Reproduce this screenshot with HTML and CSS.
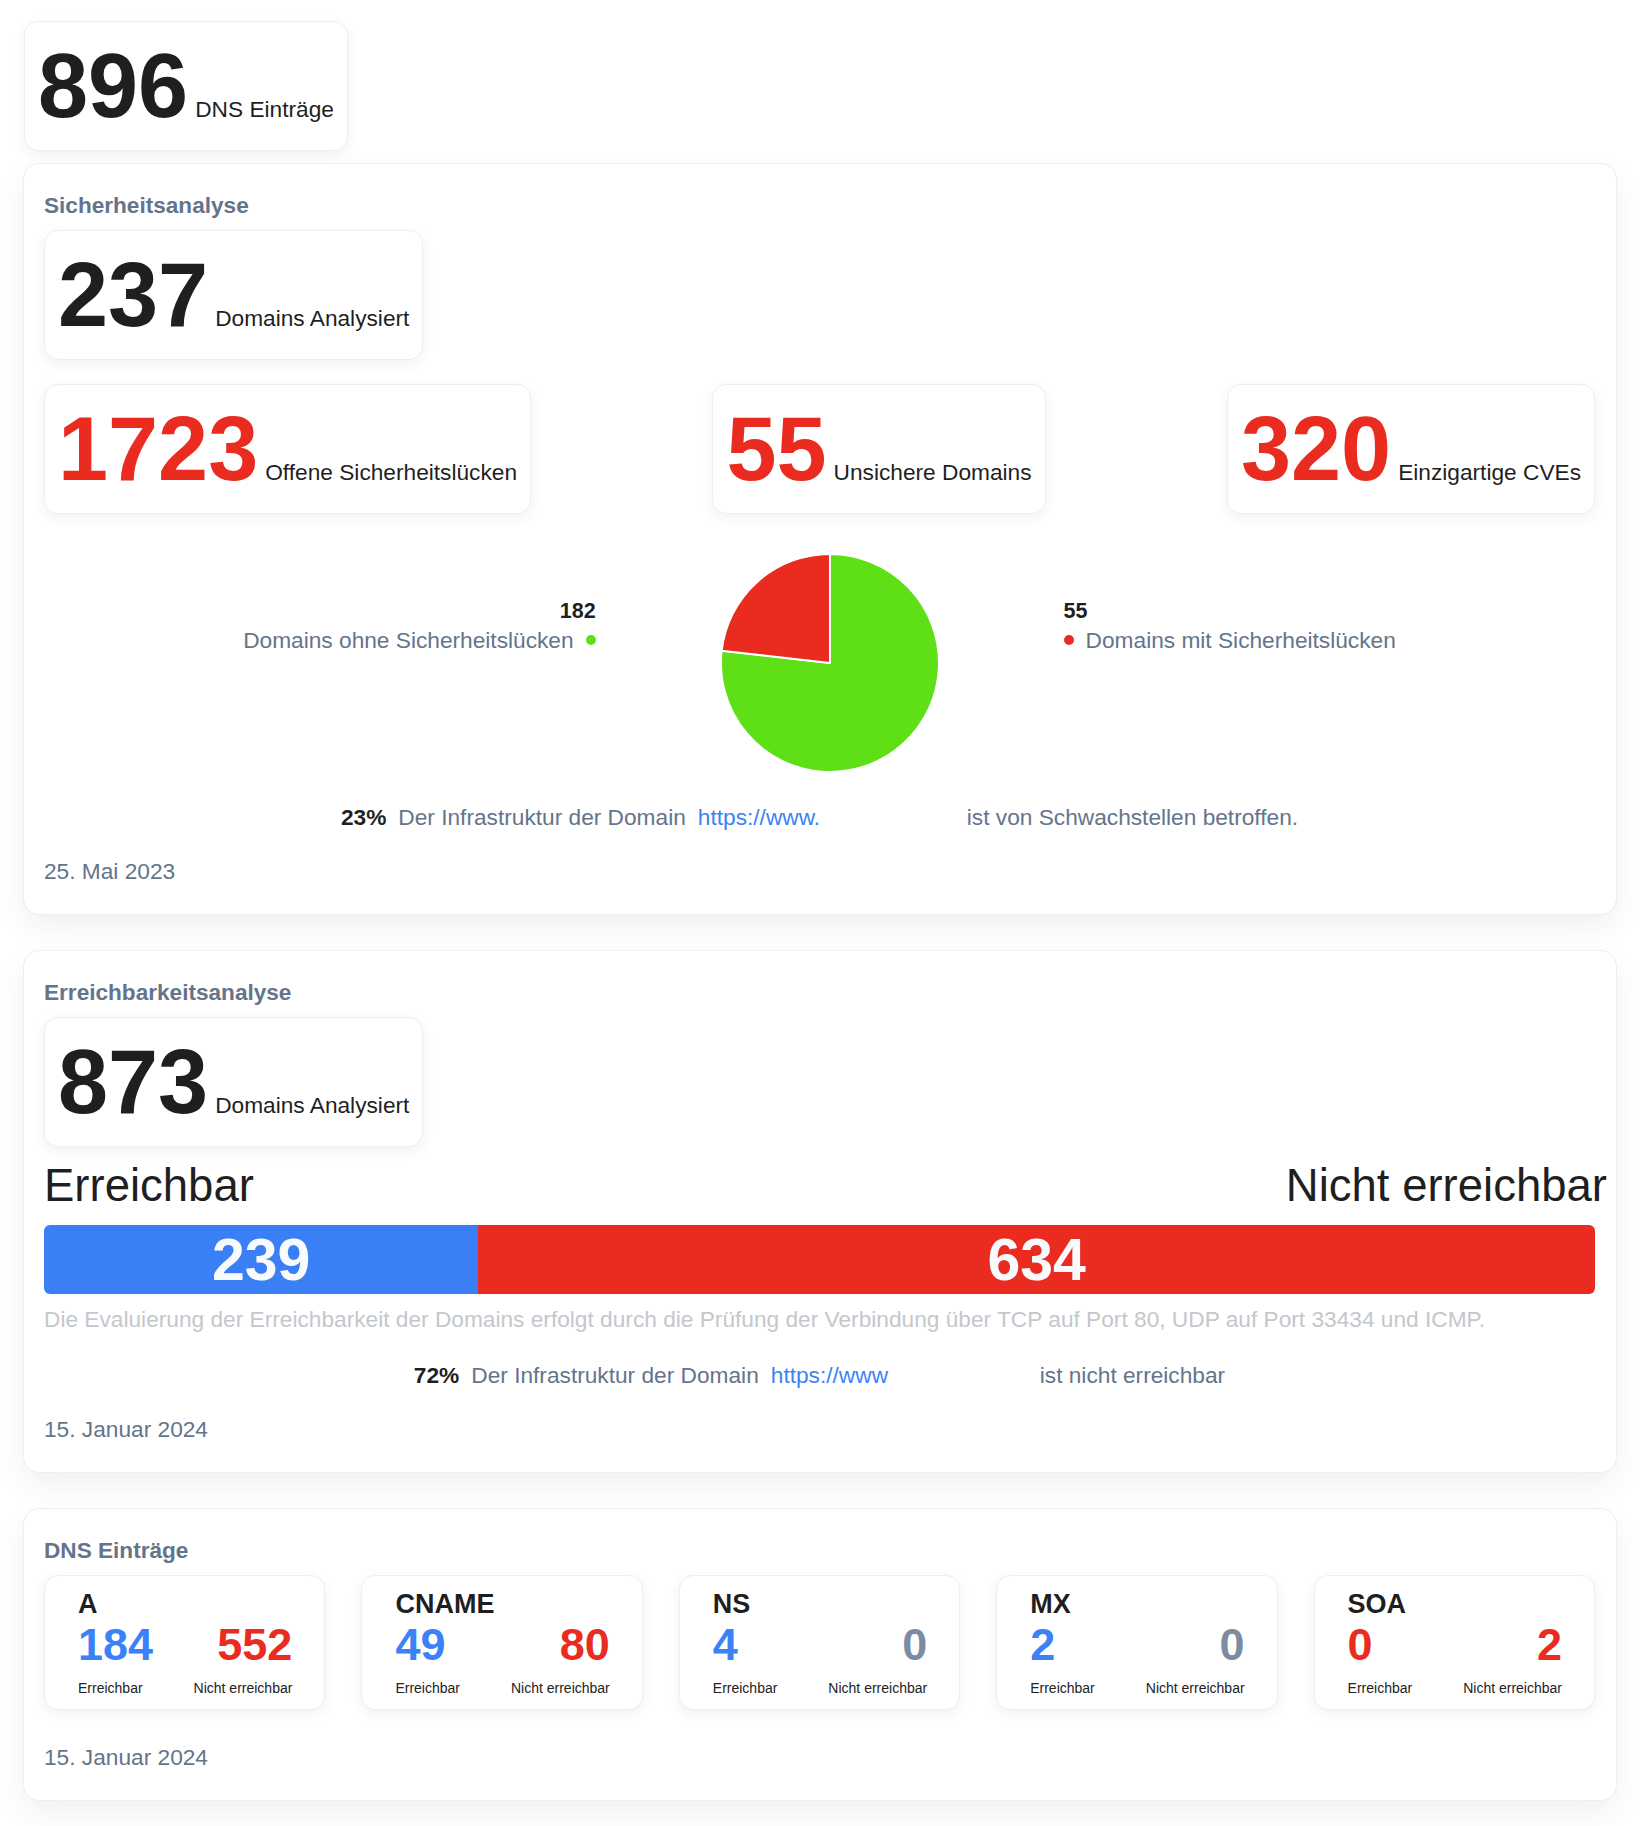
FILE: index.html
```html
<!DOCTYPE html>
<html lang="de">
<head>
<meta charset="utf-8">
<title>Dashboard</title>
<link rel="stylesheet" href="styles.css">
</head>
<body>
<div class="page">
  <div class="stat-card top-card">
    <span class="stat-num">896</span>
    <span class="stat-label">DNS Einträge</span>
  </div>

  <section class="panel">
    <h2 class="panel-title">Sicherheitsanalyse</h2>
    <div class="stat-card">
      <span class="stat-num">237</span>
      <span class="stat-label">Domains Analysiert</span>
    </div>
    <div class="stat-row">
      <div class="stat-card">
        <span class="stat-num red">1723</span>
        <span class="stat-label">Offene Sicherheitslücken</span>
      </div>
      <div class="stat-card">
        <span class="stat-num red">55</span>
        <span class="stat-label">Unsichere Domains</span>
      </div>
      <div class="stat-card">
        <span class="stat-num red">320</span>
        <span class="stat-label">Einzigartige CVEs</span>
      </div>
    </div>

    <div class="pie-area">
      <div class="legend legend-left">
        <div class="legend-count">182</div>
        <div class="legend-item">Domains ohne Sicherheitslücken <span class="dot dot-green"></span></div>
      </div>
      <svg class="pie" width="218" height="218" viewBox="0 0 218 218">
        <path d="M109 109 L0.7 96.7 A109 109 0 1 0 109 0 Z" fill="#5fe016" stroke="#fff" stroke-width="2" stroke-linejoin="round"/>
        <path d="M109 109 L109 0 A109 109 0 0 0 0.7 96.7 Z" fill="#ea2b1f" stroke="#fff" stroke-width="2" stroke-linejoin="round"/>
      </svg>
      <div class="legend legend-right">
        <div class="legend-count">55</div>
        <div class="legend-item"><span class="dot dot-red"></span> Domains mit Sicherheitslücken</div>
      </div>
    </div>

    <p class="summary">
      <b class="summary-pct">23%</b>
      <span>Der Infrastruktur der Domain</span>
      <a class="domain" href="#">https://www.</a>
      <span>ist von Schwachstellen betroffen.</span>
    </p>
    <p class="date">25. Mai 2023</p>
  </section>

  <section class="panel">
    <h2 class="panel-title">Erreichbarkeitsanalyse</h2>
    <div class="stat-card">
      <span class="stat-num">873</span>
      <span class="stat-label">Domains Analysiert</span>
    </div>
    <div class="reach-labels">
      <span>Erreichbar</span>
      <span>Nicht erreichbar</span>
    </div>
    <div class="bar">
      <div class="bar-seg bar-blue" style="width: 28%">239</div>
      <div class="bar-seg bar-red">634</div>
    </div>
    <p class="reach-note">Die Evaluierung der Erreichbarkeit der Domains erfolgt durch die Prüfung der Verbindung über TCP auf Port 80, UDP auf Port 33434 und ICMP.</p>
    <p class="summary summary-reach">
      <b class="summary-pct">72%</b>
      <span>Der Infrastruktur der Domain</span>
      <a class="domain" href="#">https://www</a>
      <span>ist nicht erreichbar</span>
    </p>
    <p class="date">15. Januar 2024</p>
  </section>

  <section class="panel">
    <h2 class="panel-title">DNS Einträge</h2>
    <div class="dns-grid">
      <div class="dns-card">
        <div class="dns-type">A</div>
        <div class="dns-cols">
          <div class="dns-col"><span class="dns-num blue">184</span><span class="dns-label">Erreichbar</span></div>
          <div class="dns-col dns-col-end"><span class="dns-num red">552</span><span class="dns-label">Nicht erreichbar</span></div>
        </div>
      </div>
      <div class="dns-card">
        <div class="dns-type">CNAME</div>
        <div class="dns-cols">
          <div class="dns-col"><span class="dns-num blue">49</span><span class="dns-label">Erreichbar</span></div>
          <div class="dns-col dns-col-end"><span class="dns-num red">80</span><span class="dns-label">Nicht erreichbar</span></div>
        </div>
      </div>
      <div class="dns-card">
        <div class="dns-type">NS</div>
        <div class="dns-cols">
          <div class="dns-col"><span class="dns-num blue">4</span><span class="dns-label">Erreichbar</span></div>
          <div class="dns-col dns-col-end"><span class="dns-num gray">0</span><span class="dns-label">Nicht erreichbar</span></div>
        </div>
      </div>
      <div class="dns-card">
        <div class="dns-type">MX</div>
        <div class="dns-cols">
          <div class="dns-col"><span class="dns-num blue">2</span><span class="dns-label">Erreichbar</span></div>
          <div class="dns-col dns-col-end"><span class="dns-num gray">0</span><span class="dns-label">Nicht erreichbar</span></div>
        </div>
      </div>
      <div class="dns-card">
        <div class="dns-type">SOA</div>
        <div class="dns-cols">
          <div class="dns-col"><span class="dns-num red">0</span><span class="dns-label">Erreichbar</span></div>
          <div class="dns-col dns-col-end"><span class="dns-num red">2</span><span class="dns-label">Nicht erreichbar</span></div>
        </div>
      </div>
    </div>
    <p class="date date-dns">15. Januar 2024</p>
  </section>
</div>
</body>
</html>
```

FILE: styles.css
```css
* {
  box-sizing: border-box;
}

html, body {
  margin: 0;
  background: #ffffff;
}

body {
  font-family: "Liberation Sans", Arial, Helvetica, sans-serif;
  color: #222222;
}

.page {
  display: flex;
  flex-direction: column;
  gap: 35px;
  padding: 21px 27px 30px 23px;
}

.stat-card {
  display: inline-flex;
  align-items: baseline;
  gap: 7px;
  align-self: flex-start;
  padding: 19px 13px;
  background: #ffffff;
  border: 1px solid #eceef5;
  border-radius: 14px;
  box-shadow: 0 4px 14px rgba(15, 23, 42, 0.06);
}

.top-card {
  margin-left: 1px;
  margin-bottom: -23px;
}

.stat-num {
  font-size: 90px;
  line-height: 1;
  font-weight: 700;
  color: #1f1f1f;
}

.stat-num.red {
  color: #ea2b1f;
}

.stat-label {
  font-size: 22.7px;
  line-height: 1;
  color: #1f1f1f;
}

.panel {
  display: flex;
  flex-direction: column;
  padding: 29px 21px 30px 20px;
  background: #ffffff;
  border: 1px solid #eceef5;
  border-radius: 16px;
  box-shadow: 0 12px 30px rgba(15, 23, 42, 0.06);
}

.panel-title {
  margin: 0 0 11px;
  font-size: 22.6px;
  line-height: 26px;
  font-weight: 700;
  color: #64748b;
}

.stat-row {
  display: flex;
  justify-content: space-between;
  margin-top: 24px;
}

.stat-row .stat-card {
  align-self: auto;
}

.pie-area {
  display: flex;
  justify-content: center;
  align-items: flex-start;
  gap: 125px;
  margin-top: 40px;
}

.pie {
  display: block;
  flex: none;
}

.legend {
  margin-top: 45px;
  font-size: 22.7px;
  line-height: 26px;
  color: #64748b;
}

.legend-left {
  text-align: right;
}

.legend-count {
  font-size: 21.5px;
  line-height: 24px;
  font-weight: 700;
  color: #1f1f1f;
  margin-bottom: 4px;
}

.legend-item {
  display: flex;
  align-items: center;
  gap: 12px;
  white-space: nowrap;
}

.dot {
  display: inline-block;
  width: 10px;
  height: 10px;
  border-radius: 50%;
}

.dot-green {
  background: #5fe016;
}

.dot-red {
  background: #ea2b1f;
}

.summary {
  display: flex;
  justify-content: center;
  align-items: baseline;
  gap: 12px;
  margin: 32px 0 0;
  font-size: 22.7px;
  line-height: 26px;
  color: #64748b;
}

.summary-pct {
  color: #1f1f1f;
}

.domain {
  display: inline-block;
  width: 257px;
  overflow: hidden;
  white-space: nowrap;
  color: #3b82f6;
  text-decoration: none;
}

.date {
  margin: 29px 0 0;
  font-size: 22.7px;
  line-height: 26px;
  color: #64748b;
}

.reach-labels {
  display: flex;
  justify-content: space-between;
  margin: 13px -12px 0 0;
  font-size: 45.5px;
  line-height: 52px;
  color: #1f1f1f;
}

.bar {
  display: flex;
  height: 69px;
  margin-top: 13px;
  border-radius: 6px;
  overflow: hidden;
}

.bar-seg {
  display: flex;
  align-items: center;
  justify-content: center;
  font-size: 59px;
  font-weight: 700;
  color: #f8fafc;
}

.bar-blue {
  background: #3b7ff7;
}

.bar-red {
  flex: 1;
  background: #ea2b1f;
}

.reach-note {
  margin: 12px 0 0;
  font-size: 22.7px;
  line-height: 26px;
  color: #c4c7cc;
}

.panel .summary + .date {
  margin-top: 28px;
}

.panel .summary-reach {
  margin-top: 30px;
}

.dns-grid {
  display: grid;
  grid-template-columns: repeat(5, 1fr);
  gap: 36px;
}

.dns-card {
  padding: 13px 32px 13px 33px;
  background: #ffffff;
  border: 1px solid #eceef5;
  border-radius: 14px;
  box-shadow: 0 4px 14px rgba(15, 23, 42, 0.06);
}

.dns-type {
  font-size: 27px;
  line-height: 30px;
  font-weight: 700;
  color: #1f1f1f;
}

.dns-cols {
  display: flex;
  justify-content: space-between;
  margin-top: 3px;
}

.dns-col {
  display: flex;
  flex-direction: column;
  align-items: flex-start;
  gap: 13px;
}

.dns-col-end {
  align-items: flex-end;
}

.dns-num {
  font-size: 45px;
  line-height: 45px;
  font-weight: 700;
}

.dns-num.blue {
  color: #3b82f6;
}

.dns-num.red {
  color: #ea2b1f;
}

.dns-num.gray {
  color: #7b8ca3;
}

.dns-label {
  font-size: 14px;
  line-height: 16px;
  color: #222222;
}

.date-dns {
  margin-top: 34px;
}
```
